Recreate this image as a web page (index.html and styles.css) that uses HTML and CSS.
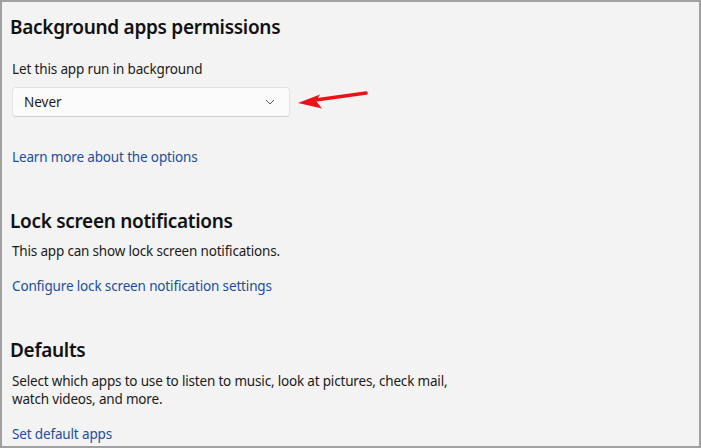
FILE: index.html
```html
<!DOCTYPE html>
<html lang="en">
<head>
  <meta charset="UTF-8">
  <meta name="viewport" content="width=device-width, initial-scale=1.0">
  <title>App settings</title>
  <link rel="stylesheet" href="styles.css">
</head>
<body>
  <div class="frame">
    <h2 class="section-title first">Background apps permissions</h2>
    <div class="label">Let this app run in background</div>
    <div class="dropdown-row">
      <div class="dropdown">
        <span>Never</span>
        <svg class="chevron" width="10" height="6" viewBox="0 0 10 6"><path d="M1 1 L5 5 L9 1" fill="none" stroke="#5c5c5c" stroke-width="1"/></svg>
      </div>
      <svg class="arrow" width="80" height="24" viewBox="0 0 80 24">
        <path d="M76 3 L22 10.5" stroke="#ec1118" stroke-width="3.6" stroke-linecap="round"/>
        <path d="M8 13 L30 4.5 L26 11 L32 18.5 Z" fill="#ec1118"/>
      </svg>
    </div>
    <a class="link first-link" href="#">Learn more about the options</a>

    <h2 class="section-title">Lock screen notifications</h2>
    <p class="desc">This app can show lock screen notifications.</p>
    <a class="link" href="#">Configure lock screen notification settings</a>

    <h2 class="section-title">Defaults</h2>
    <p class="desc multi">Select which apps to use to listen to music, look at pictures, check mail,<br>watch videos, and more.</p>
    <a class="link last-link" href="#">Set default apps</a>
  </div>
</body>
</html>
```

FILE: styles.css
```css
body {
  margin: 0;
  font-family: "Noto Sans", "Open Sans", sans-serif;
  background-color: #a0a0a0;
}
.frame {
  box-sizing: border-box;
  width: 701px;
  height: 448px;
  border: 2px solid #a0a0a0;
  background: #f3f3f3;
  padding: 11px 0 0 8px;
  color: #1b1b1b;
  overflow: hidden;
}
.section-title {
  margin: 40px 0 0;
  font-size: 19px;
  line-height: 28px;
  font-weight: 600;
  letter-spacing: -0.3px;
  color: #111;
}
.section-title.first {
  margin-top: 0;
}
.label {
  margin: 18px 0 0 2px;
  font-size: 13.5px;
  line-height: 20px;
  letter-spacing: -0.15px;
}
.dropdown-row {
  position: relative;
  margin: 8px 0 0 2px;
}
.dropdown {
  box-sizing: border-box;
  width: 278px;
  height: 30px;
  background: #fbfbfb;
  border: 1px solid #e3e3e3;
  border-bottom-color: #d0d0d0;
  border-radius: 4px;
  display: flex;
  align-items: center;
  justify-content: space-between;
  padding: 0 14px 0 11px;
  font-size: 13.5px;
}
.chevron {
  display: block;
}
.arrow {
  position: absolute;
  left: 278px;
  top: 3px;
}
.link {
  display: block;
  margin: 15px 0 0 2px;
  font-size: 13.5px;
  line-height: 20px;
  letter-spacing: -0.15px;
  color: #1a4f9c;
  text-decoration: none;
}
.first-link {
  margin-top: 30px;
}
.desc {
  margin: 6px 0 0 2px;
  font-size: 13.5px;
  line-height: 20px;
  letter-spacing: -0.18px;
}
.desc.multi {
  margin-top: 8px;
  line-height: 18px;
}
.last-link {
  margin-top: 16px;
}
```
